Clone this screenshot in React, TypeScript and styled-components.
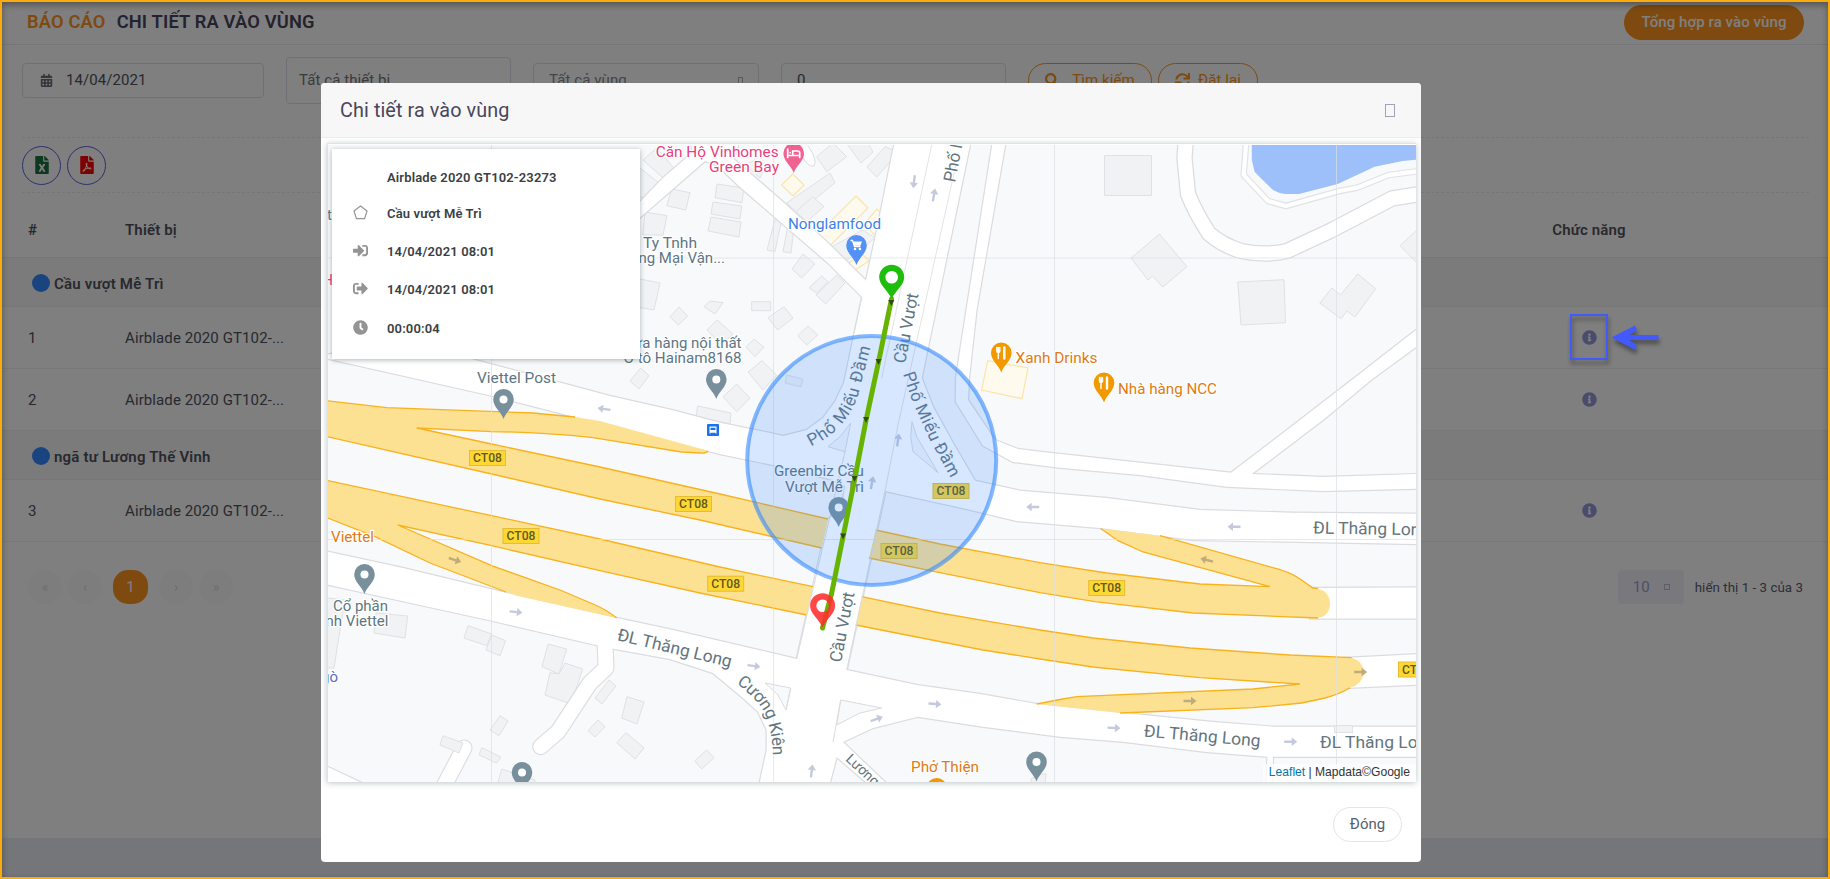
import React from 'react';
import styled, { createGlobalStyle } from 'styled-components';
import {
  FaCalendarAlt, FaClock, FaFileExcel, FaFilePdf, FaInfoCircle,
  FaSearch, FaSignInAlt, FaSignOutAlt, FaSync,
} from 'react-icons/fa';

const GlobalStyle = createGlobalStyle`
  *, *::before, *::after { box-sizing: border-box; }
  body { margin: 0; background: #ebedf2; font-family: Roboto, "Liberation Sans", sans-serif; overflow: hidden; }
`;

/* ---------- page ---------- */

const Screen = styled.div`
  position: relative;
  width: 1830px;
  height: 879px;
  overflow: hidden;
  font-size: 15px;
  color: #50525c;
`;
const Portlet = styled.main`
  height: 838px;
  background: #fff;
  padding: 0 2px;
`;
const PageHead = styled.header`
  display: flex;
  align-items: center;
  justify-content: space-between;
  height: 45px;
  padding: 0 24px 0 25px;
  border-bottom: 1px solid #ebedf2;
`;
const PageTitle = styled.h1`
  display: flex;
  gap: 11px;
  margin: -2px 0 0;
  font-size: 18.3px;
  font-weight: 600;
  letter-spacing: 0.17px;
  color: #48465b;
`;
const Accent = styled.span`color: #fd9420;`;
const SummaryButton = styled.button`
  height: 35px;
  width: 180px;
  border: 0;
  border-radius: 18px;
  background: #fd9420;
  color: #fff;
  font: 500 15px Roboto, sans-serif;
  letter-spacing: 0.08px;
`;
const PageBody = styled.section`padding: 0 20px;`;
const Filters = styled.div`
  display: flex;
  align-items: center;
  height: 70px;
`;
const Field = styled.div<{ $w: number; $tall?: boolean; $muted?: string; $inset?: number }>`
  display: flex;
  align-items: center;
  justify-content: space-between;
  width: ${p => p.$w}px;
  height: ${p => (p.$tall ? 47 : 35)}px;
  margin-right: 22px;
  padding: 0 15px 0 ${p => p.$inset ?? 12}px;
  border: 1px solid #dfe1ea;
  border-radius: 4px;
  color: ${p => p.$muted ?? '#50525c'};
  letter-spacing: 0.08px;
`;
const DateValue = styled.span`
  display: flex;
  align-items: center;
  gap: 13px;
  padding-left: 5px;
  svg { font-size: 13px; color: #6a6c78; }
`;
const GlyphBox = styled.i<{ $w: number; $h: number; $c: string }>`
  display: block;
  width: ${p => p.$w}px;
  height: ${p => p.$h}px;
  border: 1px solid ${p => p.$c};
`;
const OutlineButton = styled.button<{ $w: number; $gap: number }>`
  display: flex;
  align-items: center;
  justify-content: center;
  gap: ${p => p.$gap}px;
  width: ${p => p.$w}px;
  height: 35px;
  margin-right: 6px;
  padding: 0;
  border: 1px solid #fd9420;
  border-radius: 18px;
  background: none;
  color: #fd9420;
  font: 400 15px Roboto, sans-serif;
  letter-spacing: 0.1px;
`;
const ExportBar = styled.div`
  display: flex;
  align-items: center;
  gap: 6px;
  height: 56px;
  margin-top: 22px;
  margin-right: -1px;
  border-top: 1px dashed #ebedf2;
  border-bottom: 1px dashed #ebedf2;
`;
const RoundButton = styled.button<{ $c: string }>`
  display: grid;
  place-items: center;
  width: 39px;
  height: 39px;
  padding: 0;
  border: 1px solid #5d60dd;
  border-radius: 50%;
  background: none;
  color: ${p => p.$c};
  font-size: 18px;
`;
const Table = styled.div``;
const HeadRow = styled.div`
  display: flex;
  align-items: center;
  height: 65px;
  padding: 9px 0 0 26px;
  border-bottom: 1px solid #ebedfa;
  font-weight: 600;
  letter-spacing: 0.15px;
`;
const Row = styled.div`
  display: flex;
  align-items: center;
  height: 62px;
  padding-left: 26px;
  border-bottom: 1px solid #f0f1f7;
  letter-spacing: 0.1px;
`;
const GroupRow = styled.div`
  display: flex;
  align-items: center;
  gap: 4px;
  height: 49px;
  padding: 4px 0 0 30px;
  background: #f7f7f8;
  border-bottom: 1px solid #f0f1f7;
  font-weight: 600;
  letter-spacing: 0.2px;
`;
const Dot = styled.i`
  width: 18px;
  height: 18px;
  margin-top: -3px;
  border-radius: 50%;
  background: #3388ff;
`;
const IndexCell = styled.div`width: 97px;`;
const DeviceCell = styled.div`width: 1427px;`;
const ActionCell = styled.div`
  width: 74px;
  display: flex;
  justify-content: center;
  white-space: nowrap;
  svg { font-size: 15px; color: #9499d9; }
`;
const TableFoot = styled.footer`
  display: flex;
  align-items: center;
  justify-content: space-between;
  padding: 28px 25px 0 26px;
`;
const Pager = styled.div`
  display: flex;
  gap: 6px;
`;
const PageBtn = styled.span<{ $active?: boolean }>`
  display: grid;
  place-items: center;
  width: ${p => (p.$active ? 35 : 34)}px;
  height: 34px;
  margin: 0 ${p => (p.$active ? 5 : 0)}px;
  border-radius: ${p => (p.$active ? 15 : 17)}px;
  background: ${p => (p.$active ? '#fd9420' : '#fafafd')};
  color: ${p => (p.$active ? '#fff' : '#dcdce8')};
`;
const PageInfo = styled.div`
  display: flex;
  align-items: center;
  gap: 11px;
  font-size: 13.3px;
  letter-spacing: 0.05px;
  color: #5a5c72;
`;
const PageSize = styled.div`
  display: flex;
  align-items: center;
  justify-content: space-between;
  width: 66px;
  height: 34px;
  padding: 0 14px 0 15px;
  border-radius: 4px;
  background: #f2f2fa;
  color: #9c9ed0;
  font-size: 15px;
`;

/* ---------- layers over the page ---------- */

const Backdrop = styled.div`
  position: absolute;
  inset: 0;
  background: rgba(0, 0, 0, 0.5);
`;
const Frame = styled.div`
  position: absolute;
  inset: 0;
  border: 2px solid #fcac0a;
  box-shadow: inset 0 3px 6px rgba(0, 0, 0, 0.35);
`;
const Callout = styled.svg`
  position: absolute;
  left: 1560px;
  top: 304px;
  filter: drop-shadow(1px 4px 2px rgba(0, 0, 0, 0.4));
`;
const Dialog = styled.section`
  position: absolute;
  left: 321px;
  top: 83px;
  width: 1100px;
  height: 779px;
  border-radius: 4px;
  background: #fff;
  overflow: hidden;
`;
const DialogHead = styled.header`
  display: flex;
  align-items: center;
  justify-content: space-between;
  height: 55px;
  padding: 0 26px 0 19px;
  background: #f7f7f7;
  border-bottom: 1px solid #ebedf2;
`;
const DialogTitle = styled.h2`
  margin: 0;
  font-size: 19.8px;
  font-weight: 400;
  letter-spacing: 0.1px;
  color: #48465b;
`;
const DialogFoot = styled.footer`
  display: flex;
  justify-content: flex-end;
  padding: 25px 19px;
`;
const CloseButton = styled.button`
  width: 69px;
  height: 35px;
  padding: 0 0 2px;
  border: 1px solid #e2e5ec;
  border-radius: 18px;
  background: #fff;
  color: #595d6e;
  font: 400 15px Roboto, sans-serif;
`;
const MapFrame = styled.div`
  position: relative;
  width: 1089px;
  height: 639px;
  margin: 5px 0 0 6px;
  padding: 1px 0 0;
  border: 1px solid #dfe3e8;
  border-right: 0;
  border-bottom: 0;
  box-shadow: 0 1px 6px rgba(69, 90, 100, 0.35);
`;
const MapSvg = styled.svg`
  display: block;
  font-family: Roboto, sans-serif;
`;
const InfoCard = styled.div`
  position: absolute;
  left: 4px;
  top: 5px;
  width: 308px;
  height: 210px;
  padding: 10px 21px;
  background: #fff;
  box-shadow: 0 1px 5px rgba(69, 90, 100, 0.45);
`;
const InfoLine = styled.div`
  display: grid;
  grid-template-columns: 34px 1fr;
  align-items: center;
  height: 38.3px;
  font-size: 13px;
  font-weight: 600;
  letter-spacing: 0.15px;
  color: #3a3f44;
  &:first-child { height: 35px; padding-top: 1px; }
  svg { display: block; width: 15px; height: 15px; margin-top: -2px; color: #949494; }
`;
const Attribution = styled.div`
  position: absolute;
  right: 0;
  bottom: 0;
  height: 18px;
  padding: 0 6px;
  background: rgba(255, 255, 255, 0.7);
  font: 12.1px/17px "Liberation Sans", sans-serif;
  color: #333;
  a { color: #0078a8; }
`;

/* ---------- map data ---------- */

const BUILDINGS = [
  '671.7,189 690,192.7 685.7,210 666.7,205.7', '717,184 744,188 742,202.7 715,197.7',
  '713,202 741.7,206 740,219 711,214', '711,217 741,222 739,237 708,231',
  '645,212 667,215.7 663,235 642.7,235', '775.7,217 782,218 775,251.7 767,250',
  '788,225 794,226.7 791,253 783,251.7', '803,254 815,264 801.7,278 792,269',
  '821.7,276 828,281.7 816.7,293 809,287.7', '836.7,275 845,283 825.7,304 816,295',
  '751.7,301.7 770.7,301.7 770.7,310.7 751.7,310.7', '784,306.7 793,318 777.7,330 768,317.7',
  '808,326 817.7,335 806.7,345 797.7,335.7', '710,301 723,302.7 715,314 704,306.7',
  '679,307 687.7,316 678,325 670,316.7', '717,320 733,334 721.7,345 707,330',
  '630,279 640,279 660,283 654,310 640,307.7', '754,339 764,347 755,356.7 746,347',
  '762,360.7 776.7,375 763,390 748,372', '786.7,375 802.7,379 801,387 785,383',
  '736.7,384 750,398 736.7,411.7 723,396.7', '697.7,406 731,413 730,424 696,416.7',
  '640.7,368 649,375.7 639,389 630,381', '830,173 835,182.7 798,213 786.7,203',
  '812.7,196.7 824,206.7 806.7,221.7 796,211.7', '816.7,156.7 833,143 846.7,156.7 826.7,171.7',
  '844,140 866,140 873,152 861,163', '867,167 885,146.7 899,151.7 876.7,177',
  '643,160 656.7,148 674,168 663,178', '661.7,185 646.7,200 636,195 636,165',
  '863,230 875,238 845,261.7 831.7,246.7', '755,160 766,165 760,178 745,165',
  '1104.5,155.5 1151.5,155.5 1151.5,195.5 1104.5,195.5',
  '1159.5,234 1187,266.7 1162.7,287 1152.5,276 1148,280 1131,258',
  '1237.8,282 1284,279.7 1285.5,322.7 1241,325',
  '1357.7,274 1375.6,288.7 1355,317 1347,311 1341,318.7 1319.8,303 1332,288 1340.5,295',
  '1420,227 1400,245.7 1420,266',
  '468,625.7 491.7,634 486.7,645.7 464,638', '491.7,635 505.7,640.7 500,655.7 486,650',
  '548,644 566.7,649 559,674 542,666.7',
  '565,663 582.7,669 571,704 545,695 550,672.7 559,674',
  '609,680 616,686 602,704 595,698', '627,696.7 644,702 637,724 621.7,718',
  '598,720 605,726.7 595,737 588,730.7', '626,732.7 644,748 635,759 616.7,742.7',
  '706.7,750 714,757.7 701.7,769 694.7,761', '500,715.7 508,721 499,735.7 490,730',
  '482,747.7 500.7,757 496.7,763 479,755', '501.7,769 535,780 534,786 497,786',
  '376,613 407.7,616 405,638 374,633', '320,597 345,600 340,630 334,668 320,668',
  '1042,774 1046,774 1045,784 1030,784 1032,778',
];
const SHOPS = [
  '856,196 868,208 829,246.7 816.7,235', '876.7,209 885,216.7 876.7,238 865,223',
  '792.7,174 804,185 793,196 781.7,185', '863,255 869,261 854,270.7 848,263',
  '987.7,360.7 1028,368 1022,398.7 981.7,390',
];
const ROADS = [
  // carriageway north of the motorway, with the slip road up to the bridge
  '320,356 400,340 497.7,366 556.7,381.7 610,396 671.7,410 720,422.7 770,433 783,436 806.7,430 823,418 835,401.7 844,383 862,297 828,263 740,187 700,149 700,140 712,140 783,202 827,242 866,280.7 878,225 888,175 893,150 896,140 971,140 921.7,378 933,406.7 953,443 975,480.7 1020,490.7 1106.7,498 1200,510 1293,512.7 1420,513.7 1420,544 1193,540 1100,528 1016.7,521 966.7,509 885,491 875,530 846,672 820,672 845,486 833,480 773,465 720,454 575,417 491.7,395.7 320,357',
  // thin parallel street on the east
  '993,140 956,377 955.7,401.7 983,445.7 1013,462 1060,467.7 1140,475 1226.7,486.7 1323,491 1420,488.7 1420,474 1323,477 1251.7,474 1323,420 1371,380 1420,344 1420,327 1351.8,380 1300,420 1231,472.7 1040,451.7 1018,449 995,440 968,400 969,378 976.5,310 1006,140',
  // west street down to the card
  '690,140 693,152 663,178 636,206 636,221 705,161 730,170 740,140',
  // carriageway south of the motorway
  '320,550 403,568 506.7,593 616.7,618 673,630 720,641 796.7,659 828,519 888,480 846.7,670 916.7,685 980,694 1036.7,704 1123,713 1213,722 1273,726.7 1420,726.7 1420,756.7 1273,756.7 1272,790 1266,790 1267.5,756.7 1206.7,752 1123,741.7 1060,736.7 983,726.7 918,716.7 873,728 843,742 887,784 868,784 836.7,757 829,786 759,786 766.7,750 766.7,730 758,711.7 743,698 713,673 670,659 615,649 599,645.7 491.7,620.7 320,583',
  '1310,588 1420,587.5 1420,618.5 1310,618.5',
  '1345,658 1420,654 1420,684.5 1345,688',
  '320,763 328,767 364,784 320,790',
];
const ISLANDS = [
  '912,421.7 916.7,436.7 938,472.7 923,460 913,451.7 910.7,436.7',
  '828,446.7 840,436.7 850.7,423 845,451.7',
  '765,683 790.7,688 786,710 778,695',
  '840.7,700 881.7,708 860,713 836.7,725',
];
const LANES = [
  'M605 640L606 668L590 683L558 731.7L540.7 746.7', 'M464 748L444 786',
];
const MOTORWAY_FILL = [
  'M320 400L386.7 407.7L533 413L575 417L600 421L708 450.7Q706 453 700 453L681.7 452L593 437.7Q540 432 491.7 431.7L416.7 428L491.7 444L600 467L720 494L828 519L821.7 548L700 520L600 499L491.7 474L320 435Z',
  'M875.7 530L940 544L1040 562.7L1106.7 573L1200 584L1270 586.7L1143 552L1118 540.7L1100.7 528.5L1160 535.7L1273 567.7Q1290 572 1300 579L1313 588Q1329 589 1330 603Q1330 616 1318 618L1193 613L1095 601.7L1040 592.7L940 572.7L869 558Z',
  'M320 479L491.7 515.7L600 539L720 567L813 586.7L806.7 615L700 593L600 570.7L491.7 545.7L397.7 525L491.7 565.7L560 590L593 604Q607 610 616.7 618L516.7 595.7L430 563L375 536.7L320 515Z',
  'M861.7 596.7L940 613L990 621.7L1040 630L1093 638L1190 648L1290 655L1351.7 657.7Q1363 661 1364 672Q1362 685 1350 687.7Q1340 694 1325 698L1301.7 703L1253 707.7L1120 713L1036.7 704L1060 699.5L1076.7 696.7L1253 689L1300 684L1200 677.7L1093 667L1040 659L983 650L855.7 625Z',
];
const MOTORWAY_EDGE = [
  'M320 400L386.7 407.7L533 413L575 417', 'M708 451Q706 453.500 700 453L681.7 452L593 437.7Q540 432 491.7 431.7L416.7 428L491.7 444L600 467L720 494L828 519',
  'M821.7 548L700 520L600 499L491.7 474L320 435',
  'M875.7 530L940 544L1040 562.7L1106.7 573L1200 584L1270 586.7L1143 552L1118 540.7L1100.7 528.5',
  'M1160 535.7L1273 567.7Q1290 572 1300 579L1313 588L1318 588.5', 'M1318 618L1193 613L1095 601.7L1040 592.7L940 572.7L869 558',
  'M320 479L491.7 515.7L600 539L720 567L813 586.7', 'M806.7 615L700 593L600 570.7L491.7 545.7L397.7 525L491.7 565.7L560 590L593 604Q607 610 616.7 618',
  'M506 592L430 563L375 536.7L320 515',
  'M861.7 596.7L940 613L990 621.7L1040 630L1093 638L1190 648L1290 655L1351.7 657.7',
  'M1350 687.7Q1340 694 1325 698L1301.7 703L1253 707.7L1120 713', 'M1036.7 704L1060 699.5L1076.7 696.7L1253 689L1300 684L1200 677.7L1093 667L1040 659L983 650L855.7 625',
];
const SHIELDS: [number, number][] = [
  [487.5, 458], [693.5, 504], [521, 536], [725.7, 583.7], [951, 491], [899, 551], [1106.7, 588], [1416.5, 669.5],
];
const ARROWS: [number, number, number, boolean?][] = [
  [604, 409, 188], [455, 560, 18, true], [516, 612, 6], [754, 666, 8], [935, 704, 4], [876.7, 719, -20],
  [811.7, 771, -83], [872, 482.7, -80], [898, 440, -82], [1032.7, 507, 180], [914, 181.7, 97], [934, 195, -80],
  [1234, 526.7, 180], [1206.7, 560, 194, true], [1190, 701, 0, true], [1360.7, 672, 0, true],
  [1114, 728, 3], [1290.7, 741.7, 0],
];
const GREY = '#5d7582';
const PINK = '#e8417c';
const ORANGE = '#df7a12';
const LABELS: { x: number; y: number; t: string; c: string; w?: number; end?: boolean }[] = [
  { x: 655.7, y: 156.5, t: 'Căn Hộ Vinhomes', c: PINK, w: 123 },
  { x: 709, y: 171.5, t: 'Green Bay', c: PINK, w: 70 },
  { x: 788, y: 228.5, t: 'Nonglamfood', c: '#3f7fe6', w: 93 },
  { x: 643, y: 247.5, t: 'Ty Tnhh', c: GREY, w: 54 },
  { x: 725, y: 263.3, t: 'Thương Mại Vận...', c: GREY, end: true },
  { x: 741.5, y: 348, t: 'Cửa hàng nội thất', c: GREY, end: true },
  { x: 741.5, y: 363, t: 'Ô tô Hainam8168', c: GREY, w: 118, end: true },
  { x: 477, y: 383.3, t: 'Viettel Post', c: GREY, w: 79 },
  { x: 331, y: 541.5, t: 'Viettel', c: ORANGE, w: 43 },
  { x: 333, y: 611, t: 'Cổ phần', c: GREY, w: 55 },
  { x: 388.5, y: 626.3, t: 'nh Viettel', c: GREY, w: 63, end: true },
  { x: 338, y: 681.5, t: 'gò', c: '#5c6bc0', end: true },
  { x: 332, y: 220, t: 't', c: GREY, end: true },
  { x: 333, y: 285, t: 'H', c: PINK, end: true },
  { x: 774, y: 476.3, t: 'Greenbiz Cầu', c: GREY, w: 90 },
  { x: 785, y: 491.5, t: 'Vượt Mễ Trì', c: GREY, w: 79 },
  { x: 1015.5, y: 363, t: 'Xanh Drinks', c: ORANGE, w: 82 },
  { x: 1118, y: 393.8, t: 'Nhà hàng NCC', c: ORANGE, w: 99 },
  { x: 911, y: 771.5, t: 'Phở Thiện', c: ORANGE, w: 68 },
];
const STREETS: { x: number; y: number; r: number; t: string; w?: number; s?: number }[] = [
  { x: 616.5, y: 640, r: 13.5, t: 'ĐL Thăng Long', w: 117 },
  { x: 1313, y: 533.5, r: 1, t: 'ĐL Thăng Long', w: 117 },
  { x: 1143.5, y: 736.5, r: 5, t: 'ĐL Thăng Long', w: 117 },
  { x: 1320, y: 747.5, r: 0, t: 'ĐL Thăng Long', w: 117 },
  { x: 841, y: 663, r: -79, t: 'Cầu Vượt', w: 71 },
  { x: 905, y: 364, r: -79, t: 'Cầu Vượt', w: 71 },
  { x: 955, y: 183, r: -79, t: 'Phố Miếu Đầm' },
  { x: 845, y: 760, r: 43, t: 'Lương', s: 14 },
];
const CURVED: [string, string, string, number][] = [
  ['kien', 'M736.5 683C751 695 764 706 768 722C771 734 773 740 773 766', 'Cương Kiên', 85],
  ['west', 'M811 446.5L824 439.5Q848 423.5 858 395.5L871 345.5', 'Phố Miếu Đầm', 121],
  ['east', 'M903 374L913 403L930 440L953 482', 'Phố Miếu Đầm', 115],
];
const TRACK = '891.5,299 878.5,362 866,420.5 854.5,480 843,537 831.7,593 822.5,628';
const TICKS: [number, number][] = [[891.3, 303], [878.5, 362], [866, 420], [854.5, 479], [843, 536.5]];

const Place = ({ x, y, c, kind = 'dot' }: { x: number; y: number; c: string; kind?: string }) => (
  <g transform={`translate(${x} ${y})`}>
    <path d="M0 0C-2.500 -7.500 -10.300 -12 -10.300 -19.700A10.300 10.300 0 0 1 10.300 -19.700C10.300 -12 2.500 -7.500 0 0Z" fill={c} />
    {kind === 'dot' && <circle cy="-19.500" r="4" fill="#fff" />}
    {kind === 'food' && (
      <g stroke="#fff" fill="none" strokeLinecap="round">
        <path d="M-4.500 -25V-21.500Q-4.500 -20 -3 -20T-1.500 -21.500V-25M-3 -25V-14" strokeWidth="1.400" />
        <path d="M3 -25V-14" strokeWidth="2.400" />
      </g>
    )}
    {kind === 'bed' && (
      <path d="M-6 -24V-15.500M-6 -17.500H6V-15.500M6 -17.500V-20Q6 -22 4 -22H-1V-18M-3.600 -20.400h.1" stroke="#fff" strokeWidth="1.700" fill="none" strokeLinecap="round" />
    )}
    {kind === 'cart' && (
      <g>
        <path d="M-6 -24.500H-4L-2 -18.500H4" stroke="#fff" strokeWidth="1.300" fill="none" />
        <path d="M-3.500 -23.500H5.500L3.800 -19.300H-2.200Z" fill="#fff" />
        <circle cx="-1.500" cy="-16" r="1.300" fill="#fff" /><circle cx="3.400" cy="-16" r="1.300" fill="#fff" />
      </g>
    )}
  </g>
);

const TrackPin = ({ x, y, c }: { x: number; y: number; c: string }) => (
  <path
    transform={`translate(${x} ${y})`}
    fillRule="evenodd"
    fill={c}
    d="M0 0C-4 -9 -12.500 -14 -12.500 -21.800A12.500 12.500 0 0 1 12.500 -21.800C12.500 -14 4 -9 0 0ZM0 -28A6.300 6.300 0 1 0 0 -15.400A6.300 6.300 0 1 0 0 -28Z"
  />
);

const RING_ROAD = 'M1186 138L1184.500 158L1188 194Q1195 212 1209 233.500Q1222 245 1241 251Q1265 256 1287 251L1331 230.500L1392 198.500L1420 194';
const LAKE_PATH = 'M1246.500 138L1243.700 175L1268 201L1286 206L1339.500 191L1357 187.700L1388.600 175L1420 171';

const CityMap = () => (
  <MapSvg width="1088" height="637" viewBox="328 145 1088 637">
    <rect x="328" y="145" width="1088" height="637" fill="#f8f9fb" />
    <g fill="#f1f2f4" stroke="#dfe1e4" strokeWidth="1">
      {BUILDINGS.map(p => <polygon key={p} points={p} />)}
    </g>
    <g fill="#fffaee" stroke="#fce3a8" strokeWidth="1.2">
      {SHOPS.map(p => <polygon key={p} points={p} />)}
    </g>
    <path d="M1251.800 140V160L1254.600 171.700L1260.600 178L1273 190Q1279 193.500 1285 194H1299L1337.700 184L1374.600 166.700L1402.600 161L1420 159.500V140Z" fill="#9dc0fa" />
    <g fill="none" strokeLinejoin="round">
      <path d={RING_ROAD} stroke="#dadce0" strokeWidth="16.500" />
      <path d={LAKE_PATH} stroke="#e0e2e5" strokeWidth="6.500" />
      <path d={RING_ROAD} stroke="#fff" strokeWidth="14" />
      <path d={LAKE_PATH} stroke="#fff" strokeWidth="4.300" />
      <path d="M800 150Q806 168 814 166Q818 160 808 146" fill="#fff" stroke="#dadce0" />
    </g>
    <g fill="none" stroke="#dadce0" strokeWidth="2.400">
      {ROADS.map(p => <polygon key={p} points={p} />)}
    </g>
    <g fill="none" strokeLinecap="round" strokeLinejoin="round">
      {LANES.map(d => <path key={d} d={d} stroke="#dadce0" strokeWidth="17" />)}
      {LANES.map(d => <path key={d + 'f'} d={d} stroke="#fff" strokeWidth="14.800" />)}
    </g>
    <g fill="#fff">{ROADS.map(p => <polygon key={p} points={p} />)}</g>
    <g fill="#f8f9fb" stroke="#dadce0">{ISLANDS.map(p => <polygon key={p} points={p} />)}</g>
    <polygon points="443,735.7 463,743 459,753 440,745" fill="#f1f2f4" stroke="#dfe1e4" />
    <rect x="1334.500" y="725.500" width="18" height="7" fill="#f1f2f4" stroke="#dfe1e4" />
    <g fill="#fde193">{MOTORWAY_FILL.map(d => <path key={d} d={d} />)}</g>
    <g fill="none" stroke="#f8b21c" strokeWidth="1.300">{MOTORWAY_EDGE.map(d => <path key={d} d={d} />)}</g>
    <g fill="none" stroke="#dadce0">
      <path d="M845 451.700L796.700 659M790.700 688L786 710M885 491L846.700 670M840.700 700L833 742" />
      <path d="M931.700 145L881.700 378M957 160L898 425L885 491M862 297L854 333" strokeOpacity="0.800" />
    </g>
    <path d="M491.500 145V782M773.500 145V782M1054.500 145V782M1336.500 145V782M328 258H1416M328 539.500H1416" fill="none" stroke="#dcdfe3" strokeOpacity="0.700" />
    {ARROWS.map(([x, y, r, dark]) => (
      <path key={`${x}-${y}`} transform={`translate(${x} ${y}) rotate(${r})`} d="M-6.500 -1.200H1V-4.200L6.500 0L1 4.200V1.200H-6.500Z" fill={dark ? '#bfab7b' : '#c5c9dc'} />
    ))}
    <g fontSize="13" fontWeight="500" fill="#63571c" textAnchor="middle">
      {SHIELDS.map(([x, y]) => (
        <g key={`${x}`}>
          <rect x={x - 18} y={y - 7.5} width="36" height="15" fill="#fdd835" stroke="#e3bd33" />
          <text x={x} y={y + 4.2} textLength="29" lengthAdjust="spacingAndGlyphs">CT08</text>
        </g>
      ))}
    </g>
    <g fontSize="17" fill="#63757d" stroke="#fff" strokeWidth="2" paintOrder="stroke" strokeLinejoin="round">
      {STREETS.map(s => (
        <text key={`${s.x}`} transform={`translate(${s.x} ${s.y}) rotate(${s.r})`} textLength={s.w} lengthAdjust="spacingAndGlyphs" fontSize={s.s}>{s.t}</text>
      ))}
      {CURVED.map(([id, d, t, w]) => (
        <React.Fragment key={id}>
          <path id={id} d={d} fill="none" stroke="none" />
          <text textLength={w}><textPath href={`#${id}`}>{t}</textPath></text>
        </React.Fragment>
      ))}
    </g>
    <g fontSize="15" stroke="#fff" strokeWidth="2.500" paintOrder="stroke" strokeLinejoin="round">
      {LABELS.map(l => (
        <text key={`${l.x}${l.t}`} x={l.x} y={l.y} fill={l.c} textLength={l.w} lengthAdjust="spacingAndGlyphs" textAnchor={l.end ? 'end' : 'start'}>{l.t}</text>
      ))}
    </g>
    <Place x={503.5} y={419} c="#78909c" />
    <Place x={716.3} y={399} c="#78909c" />
    <Place x={364.5} y={594} c="#78909c" />
    <Place x={522} y={792} c="#78909c" />
    <Place x={838.7} y={527} c="#78909c" />
    <Place x={1036.5} y={781.5} c="#78909c" />
    <Place x={793.7} y={173} c="#f06292" kind="bed" />
    <Place x={856.5} y={265} c="#5491f5" kind="cart" />
    <Place x={1001.3} y={372.5} c="#f29900" kind="food" />
    <Place x={1104} y={402.5} c="#f29900" kind="food" />
    <Place x={936.7} y={808} c="#f29900" kind="food" />
    <g transform="translate(707 424)">
      <rect width="12" height="12" rx="1" fill="#1a73e8" />
      <path d="M2.500 2.500H9.500V9.500H8.500V8.700H3.500V9.500H2.500ZM3.500 3.700V6H8.500V3.700Z" fillRule="evenodd" fill="#fff" />
    </g>
    <circle cx="871.700" cy="460.500" r="124.500" fill="#3388ff" fillOpacity="0.200" stroke="#3388ff" strokeOpacity="0.600" strokeWidth="4" />
    <polyline points={TRACK} fill="none" stroke="#66b300" strokeWidth="5" strokeLinecap="round" strokeLinejoin="round" />
    {TICKS.map(([x, y]) => <path key={y} d={`M${x - 3} ${y - 3}h6l-3 6z`} fill="#37481a" />)}
    <TrackPin x={891.7} y={299} c="#1fbe0d" />
    <TrackPin x={822.6} y={627.5} c="rgba(255,45,45,.88)" />
  </MapSvg>
);

const Pentagon = () => (
  <svg viewBox="0 0 15 15" fill="none" stroke="currentColor" strokeWidth="1.200" strokeLinejoin="round">
    <path d="M7.500 1L14 6L11.600 13.600H3.400L1 6Z" />
  </svg>
);

const InfoRow = ({ icon, children }: { icon?: React.ReactNode; children: React.ReactNode }) => (
  <InfoLine><span>{icon}</span><span>{children}</span></InfoLine>
);

const DeviceRow = ({ n }: { n: number }) => (
  <Row>
    <IndexCell>{n}</IndexCell>
    <DeviceCell>Airblade 2020 GT102-...</DeviceCell>
    <ActionCell><FaInfoCircle /></ActionCell>
  </Row>
);

export default function App() {
  return (
    <Screen>
      <GlobalStyle />
      <Portlet>
        <PageHead>
          <PageTitle><Accent>BÁO CÁO</Accent><span>CHI TIẾT RA VÀO VÙNG</span></PageTitle>
          <SummaryButton>Tổng hợp ra vào vùng</SummaryButton>
        </PageHead>
        <PageBody>
          <Filters>
            <Field $w={242}><DateValue><FaCalendarAlt />14/04/2021</DateValue></Field>
            <Field $w={225} $tall $muted="#74767f">Tất cả thiết bị</Field>
            <Field $w={226} $muted="#888a95" $inset={15}>Tất cả vùng<GlyphBox $w={5} $h={7} $c="#b0b1bb" /></Field>
            <Field $w={225} $inset={15}>0</Field>
            <OutlineButton $w={124} $gap={13}><FaSearch size={14} />Tìm kiếm</OutlineButton>
            <OutlineButton $w={100} $gap={8}><FaSync size={15} />Đặt lại</OutlineButton>
          </Filters>
          <ExportBar>
            <RoundButton $c="#1d7044"><FaFileExcel /></RoundButton>
            <RoundButton $c="#ff0000"><FaFilePdf /></RoundButton>
          </ExportBar>
        </PageBody>
        <Table>
          <HeadRow>
            <IndexCell>#</IndexCell>
            <DeviceCell>Thiết bị</DeviceCell>
            <ActionCell>Chức năng</ActionCell>
          </HeadRow>
          <GroupRow><Dot />Cầu vượt Mễ Trì</GroupRow>
          <DeviceRow n={1} />
          <DeviceRow n={2} />
          <GroupRow><Dot />ngã tư Lương Thế Vinh</GroupRow>
          <DeviceRow n={3} />
        </Table>
        <TableFoot>
          <Pager>
            <PageBtn>«</PageBtn>
            <PageBtn>‹</PageBtn>
            <PageBtn $active>1</PageBtn>
            <PageBtn>›</PageBtn>
            <PageBtn>»</PageBtn>
          </Pager>
          <PageInfo>
            <PageSize>10<GlyphBox $w={6} $h={6} $c="#b9bbdf" /></PageSize>
            hiển thị 1 - 3 của 3
          </PageInfo>
        </TableFoot>
      </Portlet>

      <Backdrop />
      <Frame />
      <Callout width="110" height="70" viewBox="1560 304 110 70" fill="none" stroke="#4259fb">
        <rect x="1571" y="315" width="36" height="44" strokeWidth="2" />
        <path d="M1618 337.500H1658.500" strokeWidth="5" />
        <path d="M1611.500 337.500L1635 325.500L1637 330L1626 337.500L1637 345.500L1635 350Z" fill="#4259fb" stroke="none" />
      </Callout>

      <Dialog>
        <DialogHead>
          <DialogTitle>Chi tiết ra vào vùng</DialogTitle>
          <GlyphBox $w={10} $h={13} $c="#a1a3b5" />
        </DialogHead>
        <MapFrame>
          <CityMap />
          <InfoCard>
            <InfoRow>Airblade 2020 GT102-23273</InfoRow>
            <InfoRow icon={<Pentagon />}>Cầu vượt Mễ Trì</InfoRow>
            <InfoRow icon={<FaSignInAlt />}>14/04/2021 08:01</InfoRow>
            <InfoRow icon={<FaSignOutAlt />}>14/04/2021 08:01</InfoRow>
            <InfoRow icon={<FaClock />}>00:00:04</InfoRow>
          </InfoCard>
          <Attribution><a>Leaflet</a> | Mapdata©Google</Attribution>
        </MapFrame>
        <DialogFoot><CloseButton>Đóng</CloseButton></DialogFoot>
      </Dialog>
    </Screen>
  );
}
